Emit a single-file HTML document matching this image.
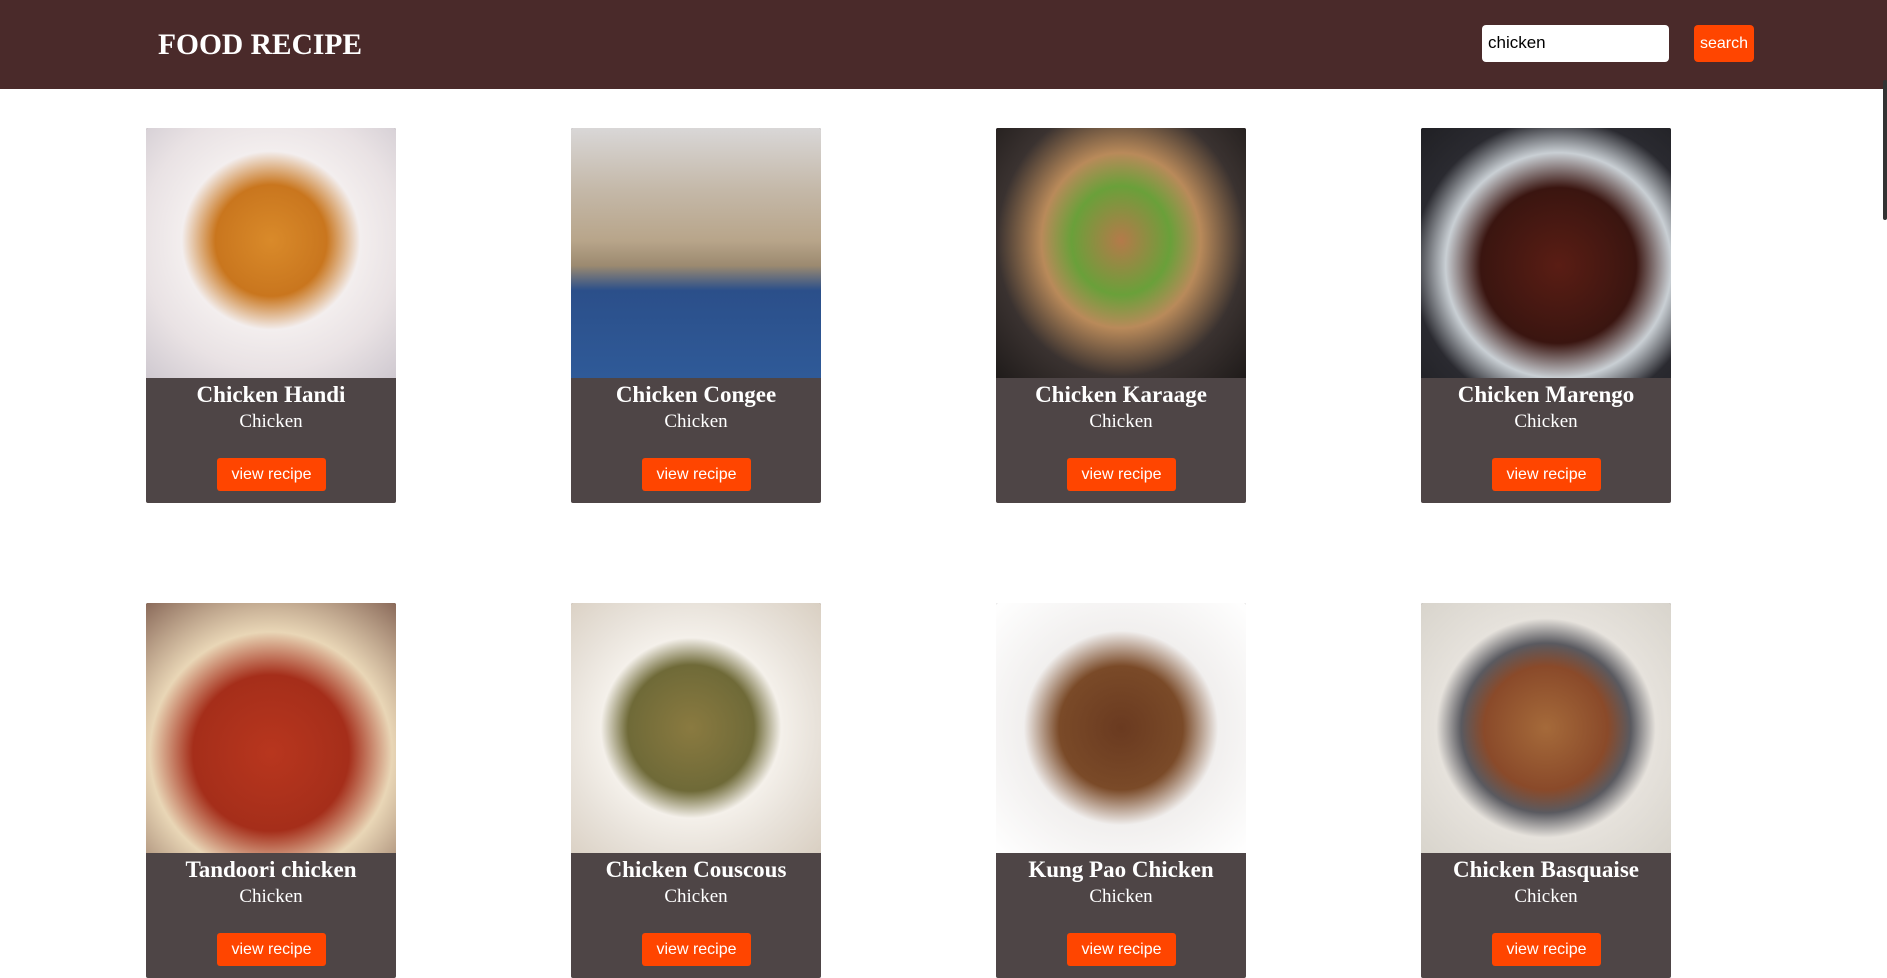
<!DOCTYPE html>
<html><head><meta charset="utf-8"><style>
*{margin:0;padding:0;box-sizing:border-box}
body{width:1887px;height:897px;overflow:hidden;background:#fff;font-family:"Liberation Serif",serif;position:relative}
.hdr{position:absolute;left:0;top:0;width:1887px;height:89px;background:#4a2a2a}
.hdr h1{position:absolute;left:158px;top:27px;color:#fff;font-size:29.5px;font-weight:bold;line-height:36px}
.inp{position:absolute;left:1482px;top:25px;width:187px;height:37px;background:#fff;border-radius:4px;font-family:"Liberation Sans",sans-serif;font-size:17px;padding:8px 6px;color:#000}
.sb{position:absolute;left:1694px;top:25px;width:60px;height:37px;background:#ff4500;border-radius:4px;color:#fff;font-family:"Liberation Sans",sans-serif;font-size:16px;text-align:center;line-height:37px}
.card{position:absolute;width:250px;height:375px;background:#4e4546;border-radius:2px;overflow:hidden}
.img{position:absolute;left:0;top:0;width:250px;height:250px}
.t{position:absolute;left:0;top:254px;width:250px;text-align:center;color:#fff;font-weight:bold;font-size:23px;line-height:26px}
.s{position:absolute;left:0;top:282px;width:250px;text-align:center;color:#fff;font-size:19px;line-height:24px}
.b{position:absolute;left:71px;top:330px;width:109px;height:33px;background:#ff4500;border-radius:3px;color:#fff;font-family:"Liberation Sans",sans-serif;font-size:16px;text-align:center;line-height:33px}
</style></head><body>
<div class="hdr"><h1>FOOD RECIPE</h1><div class="inp">chicken</div><div class="sb">search</div></div>

<div class="card" style="left:146px;top:128px"><div class="img" style="background:radial-gradient(circle at 50% 45%,#d98a2a 0,#c9761e 30%,#f3eeee 48%,#e9e2e4 70%,#cfc9d0 100%)"></div><div class="t">Chicken Handi</div><div class="s">Chicken</div><div class="b">view recipe</div></div>
<div class="card" style="left:571px;top:128px"><div class="img" style="background:linear-gradient(180deg,#d9d7d7 0,#c4b8a8 25%,#b8a58a 45%,#9c8a70 55%,#2b4f8a 65%,#2f5a98 100%)"></div><div class="t">Chicken Congee</div><div class="s">Chicken</div><div class="b">view recipe</div></div>
<div class="card" style="left:996px;top:128px"><div class="img" style="background:radial-gradient(ellipse at 50% 45%,#b47a4a 0,#6aa03a 28%,#b98a5a 45%,#3a3230 70%,#1f1b1a 100%)"></div><div class="t">Chicken Karaage</div><div class="s">Chicken</div><div class="b">view recipe</div></div>
<div class="card" style="left:1421px;top:128px"><div class="img" style="background:radial-gradient(circle at 55% 55%,#5a1d14 0,#3a1510 40%,#c9cfd4 58%,#2a2a30 75%,#202024 100%)"></div><div class="t">Chicken Marengo</div><div class="s">Chicken</div><div class="b">view recipe</div></div>

<div class="card" style="left:146px;top:603px"><div class="img" style="background:radial-gradient(circle at 50% 60%,#b8361e 0,#a52e1a 40%,#e9d6b6 62%,#8a6a5a 100%)"></div><div class="t">Tandoori chicken</div><div class="s">Chicken</div><div class="b">view recipe</div></div>
<div class="card" style="left:571px;top:603px"><div class="img" style="background:radial-gradient(circle at 48% 50%,#8a7a40 0,#6f6a38 35%,#f4f0ea 50%,#e8e2da 70%,#d9cfc2 100%)"></div><div class="t">Chicken Couscous</div><div class="s">Chicken</div><div class="b">view recipe</div></div>
<div class="card" style="left:996px;top:603px"><div class="img" style="background:radial-gradient(ellipse at 50% 50%,#6a3a20 0,#7a4a28 35%,#f1efee 55%,#ffffff 100%)"></div><div class="t">Kung Pao Chicken</div><div class="s">Chicken</div><div class="b">view recipe</div></div>
<div class="card" style="left:1421px;top:603px"><div class="img" style="background:radial-gradient(ellipse at 50% 50%,#a56a3a 0,#8a4a2a 35%,#5a5a60 48%,#e6e2dc 62%,#d8d4cc 100%)"></div><div class="t">Chicken Basquaise</div><div class="s">Chicken</div><div class="b">view recipe</div></div>

<div style="position:absolute;left:1883px;top:80px;width:4px;height:140px;background:#333;border-radius:2px"></div>
</body></html>
